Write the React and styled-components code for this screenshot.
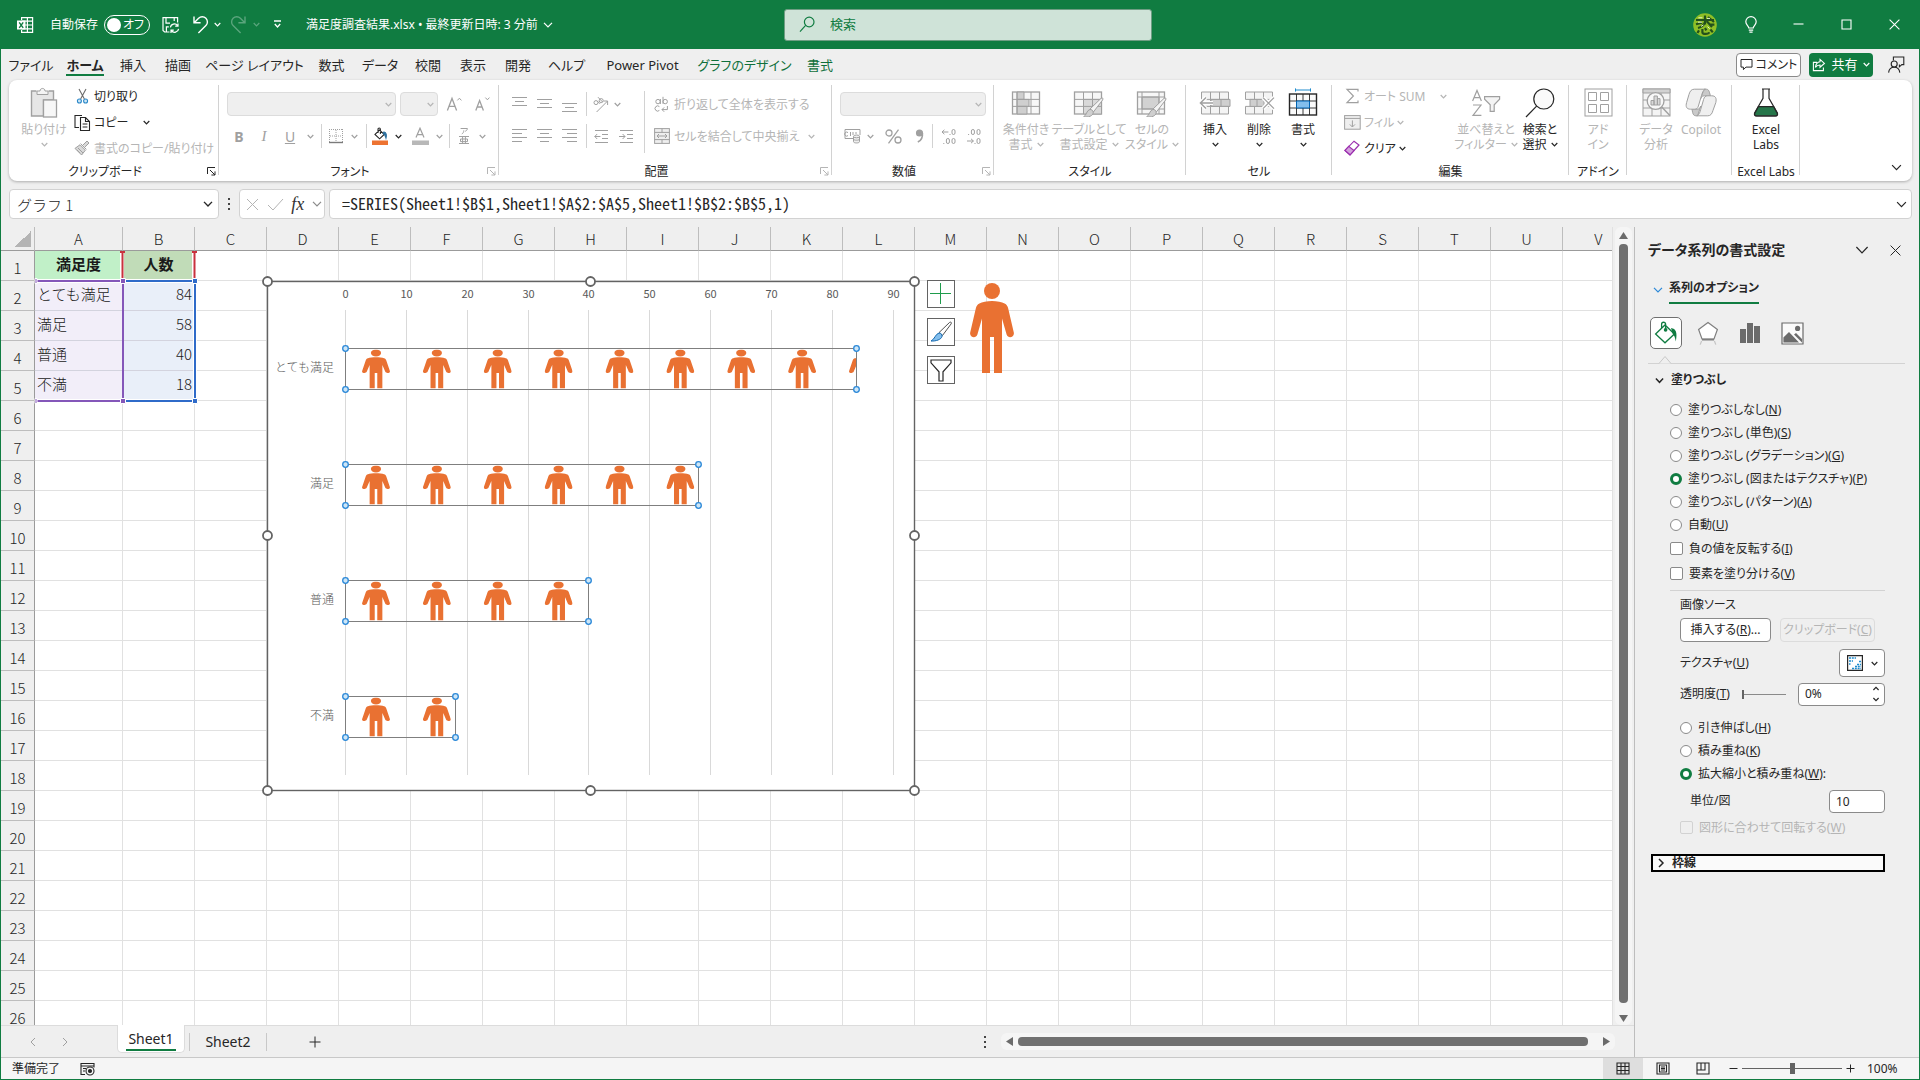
import React, { useState } from 'react';
import styled, { createGlobalStyle, css } from 'styled-components';

const GREEN = '#107c41';
const DARK = '#262626';
const GREY = '#a0a0a0';
const DISABLED = '#b5b5b5';

const TABS = [
  { name: 'ファイル', width: 56 },
  { name: 'ホーム', width: 52, active: true },
  { name: '挿入', width: 44 },
  { name: '描画', width: 46 },
  { name: 'ページ レイアウト', width: 107 },
  { name: '数式', width: 47 },
  { name: 'データ', width: 50 },
  { name: '校閲', width: 46 },
  { name: '表示', width: 44 },
  { name: '開発', width: 46 },
  { name: 'ヘルプ', width: 51 },
  { name: 'Power Pivot', width: 101 },
  { name: 'グラフのデザイン', width: 103, green: true },
  { name: '書式', width: 48, green: true },
];

const COLUMNS = 'ABCDEFGHIJKLMNOPQRSTUV'.split('');
const ROWS = Array.from({ length: 26 }, (_, i) => i + 1);
const DATA = [
  { label: 'とても満足', value: 84 },
  { label: '満足', value: 58 },
  { label: '普通', value: 40 },
  { label: '不満', value: 18 },
];

const FILLS = [
  { text: '塗りつぶしなし', accel: 'N' },
  { text: '塗りつぶし (単色)', accel: 'S' },
  { text: '塗りつぶし (グラデーション)', accel: 'G' },
  { text: '塗りつぶし (図またはテクスチャ)', accel: 'P' },
  { text: '塗りつぶし (パターン)', accel: 'A' },
  { text: '自動', accel: 'U' },
];

const STACKS = [
  { text: '引き伸ばし', accel: 'H' },
  { text: '積み重ね', accel: 'K' },
  { text: '拡大縮小と積み重ね', accel: 'W', after: ':' },
];

/* ---------- icons ---------- */

const Icon = ({ w = 16, h, box, color = GREY, children, ...rest }) => (
  <Svg
    width={w}
    height={h || w}
    viewBox={box || `0 0 ${w} ${h || w}`}
    stroke={color}
    aria-hidden="true"
    {...rest}
  >
    {children}
  </Svg>
);

const Chevron = ({ size = 7, color = DARK, width = 1.2 }) => (
  <Icon w={size} box="0 0 8 8" color={color} strokeWidth={width * (8 / size)}>
    <path d="M.8 2.3 4 5.6l3.2-3.3" />
  </Icon>
);

const ExcelIcon = () => (
  <Icon w={18} color="#fff" strokeWidth="1.2">
    <path d="M5.6 4V1.6h11v14.8h-11V14M5.6 5.2h11M8 9h8.6M5.6 12.8h11M11.4 1.6v14.8" />
    <rect x="1" y="4.5" width="8.5" height="9" fill="#fff" stroke="none" />
    <path d="m3.2 6.4 4 5.4M7.2 6.4l-4 5.4" stroke={GREEN} strokeWidth="1.4" />
  </Icon>
);

const SaveIcon = () => (
  <Icon w={18} color="#fff" strokeWidth="1.2">
    <path d="M7.5 16H2.6L1 14.4V1.6h14.6v5M4 1.6v5.6h4M4.4 16v-5.2h2.4M12.2 1.6V5" />
    <path d="M8.4 11.4a4 4 0 0 1 7.2-1.8M16 7.4v2.8h-2.8M16.6 12.8a4 4 0 0 1-7.2 1.8M9 17v-2.8h2.8" />
  </Icon>
);

const UndoIcon = ({ flip, color }) => (
  <Icon w={17} h={19} color={color} strokeWidth="1.4">
    <path
      transform={flip ? 'translate(17 0) scale(-1 1)' : undefined}
      d="M2 1.4v6.4h6.6M2.4 7.4 6.6 3.3a5.1 5.1 0 0 1 7.3 7.3L6.4 18"
    />
  </Icon>
);

const CustomizeIcon = () => (
  <Icon w={9} color="#fff" strokeWidth="1.3">
    <path d="M1 1h7M1.8 4l2.7 3 2.7-3" />
  </Icon>
);

const SearchIcon = () => (
  <Icon w={17} color={GREEN} strokeWidth="1.2">
    <circle cx="10.2" cy="6" r="4.8" />
    <path d="M6.6 9.4 1 15.6" />
  </Icon>
);

const AvatarIcon = () => (
  <Icon w={24} color="#22501c" strokeWidth="2.2">
    <circle cx="12" cy="12" r="11.8" fill="#8fbf26" stroke="none" />
    <path d="M3 7h18M12 2.4v9M3 11.2l6-1.6M15 4l6 5M5 15c4-1 6-3 7-6M13.6 8l5.4 6M17.4 11.6h4" />
    <path d="M6 17.4 4.4 20M9.4 16v3.6c0 1.8 6.2 1.8 6.8-.4M12 15l1.4 2.4M17.4 16.6l2.4 2.6" />
    <path d="M5 9.200h4M14 5.400h3M8 13.400l2.400-1.400M14.600 13.600l2 2M5.400 4.800h4" stroke="#e8f5c8" strokeWidth="1" />
  </Icon>
);

const BulbIcon = () => (
  <Icon w={12} h={17} color="#fff" strokeWidth="1.2">
    <path d="M3.8 12c0-2-3-3.2-3-6.2a5.2 5.2 0 0 1 10.4 0c0 3-3 4.2-3 6.2zM3.8 14.2h4.4M4.4 16.2h3.2" />
  </Icon>
);

const WindowIcon = ({ d }) => (
  <Icon w={11} color="#fff" strokeWidth="1.1"><path d={d} /></Icon>
);

const CommentIcon = () => (
  <Icon w={13} color={DARK}><path d="M1 1.5h11v7.6H6L3.4 11.6V9.1H1z" /></Icon>
);

const ShareIcon = () => (
  <Icon w={14} color="#fff" strokeWidth="1.1">
    <path d="M5 4.4H1.4v8.2h10V9.4M8 1.4l4.4 4L8 9.2V7C5.6 7 4.4 7.8 3.4 9.4 3.8 6 5.4 4 8 3.8z" />
  </Icon>
);

const PersonChatIcon = () => (
  <Icon w={18} color={DARK} strokeWidth="1.1">
    <path d="M6.4 4.4V1h10.4v7.6h-2l-2.4 2.2V8.6" />
    <circle cx="7.2" cy="8" r="3" />
    <path d="M1.6 16.6c.4-3.6 2.6-5.4 5.6-5.4s5.2 1.8 5.6 5.4" />
  </Icon>
);

const PasteIcon = () => (
  <Icon w={28} h={31}>
    <path d="M6.5 4H1.5v25h12V13h10V4h-5" fill="#e6e6e6" strokeWidth="1.4" />
    <path d="M7 7.5V4h3c0-3.4 5-3.4 5 0h3v3.5z" fill="#f4f4f4" />
    <rect x="13.5" y="13" width="13" height="17" fill="#f7f7f7" strokeWidth="1.3" />
  </Icon>
);

const CutIcon = () => (
  <Icon w={13} h={16} color="#6b6b6b" strokeWidth="1.1">
    <path d="m3 1 5.4 10M10 1 4.6 11" />
    <circle cx="3.4" cy="13" r="2" stroke="#2b88c8" fill="#cde6f7" />
    <circle cx="9.6" cy="13" r="2" stroke="#2b88c8" fill="#cde6f7" />
  </Icon>
);

const CopyIcon = () => (
  <Icon w={17} color={DARK} strokeWidth="1.1">
    <path d="M5 13.5H1V1.5h7" />
    <path d="M6.5 3.5h5l4 4v9h-9zM11.5 3.5v4h4M8.6 10h4.8M8.6 13h4.8" />
  </Icon>
);

const PainterIcon = () => (
  <Icon w={16}>
    <path d="m9 5 4-4 2 2-4 4M6.6 3.6l5.8 5.8M1 8.4l5-3.6 5.4 5.4L7.6 15z" fill="#d9d9d9" />
    <path d="m4 8 5 5M3 10l3 3" />
  </Icon>
);

const LaunchIcon = ({ color }) => (
  <Icon w={10} color={color}>
    <path d="M1.5 8V1.5H9M4 4l5 5M9 5.4V9H5.4" />
  </Icon>
);

const BorderIcon = () => (
  <Icon w={16}>
    <path d="M1 1.5h14M1.5 1v13M14.5 1v13M8 2v12M2 8h12" strokeDasharray="1 1" />
    <path d="M1 14.5h14" stroke="#7a7a7a" strokeWidth="1.4" />
  </Icon>
);

const FillIcon = () => (
  <Icon w={17} h={18} color={DARK} strokeWidth="1.1">
    <path d="M3 7.4 7.6 3l4.6 4.4-4.6 4.4zM6 6V2.4c0-1.8 2.4-1.8 2.4 0V7" />
    <path d="M12 5c2.4.6 2.8 3 2 6-.6-2.4-1-3.6-2.8-4.6z" fill="#2b6f9e" stroke="#2b6f9e" />
    <rect x="0" y="13.5" width="16" height="4.5" fill="#ed7331" stroke="none" />
  </Icon>
);

const FontColorIcon = () => (
  <Icon w={17} h={18}>
    <path d="m4 10.6 4-9.4 4 9.4M5.4 7.6h5.2" strokeWidth="1.2" />
    <rect x="0" y="13.5" width="17" height="4.5" fill="#b8b8b8" stroke="none" />
  </Icon>
);

const SizeIcon = ({ grow }) => (
  <Icon w={17} h={16}>
    <path d={grow ? 'M1.4 14.4 6 2.4l4.6 12M3 10.4h6' : 'M1.8 14.4 5.6 4.6l3.8 9.8M3.2 11h4.8'} strokeWidth="1.3" />
    <path d={grow ? 'm11.4 4.4 2-2.2 2 2.2' : 'm11.4 1.6 2 2.2 2-2.2'} />
  </Icon>
);

const RubyIcon = () => (
  <Icon w={12} h={18}>
    <path d="M2.6 1.5h6.8c0 1.4-1 2.2-2.2 2.8M5.8 3.4C5.8 5 5.2 6.2 3.8 7" />
    <path d="M1 9.5h10M2.5 12h7v2.6h-7zM4.6 9.5v7M7.4 9.5v7M1 16.5h10" />
  </Icon>
);

const LinesIcon = ({ lines }) => (
  <Icon w={15} h={16} strokeWidth="1">
    {lines.map(([x1, x2, y]) => (
      <path key={y} d={`M${x1} ${y}.5H${x2}`} />
    ))}
  </Icon>
);

const AngleIcon = () => (
  <Icon w={17} h={17}>
    <path d="M3.6 16 14.6 5M10.6 5h4v4" />
    <circle cx="3" cy="6.6" r="2" />
    <path d="M4.4 5.2 7 7.8" />
    <circle cx="8.2" cy="4.6" r="2" />
    <path d="M5 1.2 9.6 6" />
  </Icon>
);

const IndentIcon = ({ right }) => (
  <Icon w={15} h={15}>
    <path d="M1 1.5h13M8 5.5h6M8 9.5h6M1 13.5h13" />
    <path d={right ? 'M0 7.5h6M3.6 5 6 7.5 3.6 10' : 'M6.4 7.5H.8M3.2 5 .8 7.5 3.2 10'} />
  </Icon>
);

const WrapIcon = () => (
  <Icon w={16} h={17}>
    <circle cx="4" cy="5.6" r="2.2" />
    <path d="M6.4 3v5M9 .8v7" />
    <circle cx="11.2" cy="5.6" r="2.2" />
    <path d="M5.4 10.6a2.6 2.6 0 1 0 0 3.8M13.4 10v3.6H8M10.2 11.4 8 13.6l2.2 2.2" />
  </Icon>
);

const MergeIcon = () => (
  <Icon w={16}>
    <rect x=".6" y=".6" width="14.8" height="14.8" fill="#efefef" />
    <path d="M.6 4.4h14.8M.6 11.6h14.8M8 .6v3.8M8 11.6v3.8M3 8h10M5 6 3 8l2 2M11 6l2 2-2 2" />
  </Icon>
);

const CurrencyIcon = () => (
  <Icon w={17} h={16}>
    <path d="M9 10.5H1v-9h15V7M4 4.6a2 2 0 1 0 0 3M6.5 4v4M9 4v3M12 4v2" />
    <path d="M9.5 8.6v5c0 1.8 6 1.8 6 0v-5M9.5 11c0 1.6 6 1.6 6 0" fill="#efefef" />
    <ellipse cx="12.5" cy="8.4" rx="3" ry="1.4" fill="#efefef" />
  </Icon>
);

const DecimalIcon = ({ less }) => (
  <Icon w={17} h={17}>
    {less ? (
      <>
        <rect x="5.4" y="1.5" width="3" height="5" rx="1.5" />
        <rect x="11" y="1.5" width="3" height="5" rx="1.5" />
        <rect x="11" y="10.5" width="3" height="5" rx="1.5" />
        <path d="M2.6 6v1M1 13h6.4M5 10.8 7.4 13 5 15.2M9 15v1" />
      </>
    ) : (
      <>
        <rect x="11" y="1.5" width="3" height="5" rx="1.5" />
        <rect x="5.4" y="10.5" width="3" height="5" rx="1.5" />
        <rect x="11" y="10.5" width="3" height="5" rx="1.5" />
        <path d="M7.4 4H1M3.4 1.8 1 4l2.4 2.2M9 6v1M2.8 15v1" />
      </>
    )}
  </Icon>
);

const Brush = () => (
  <>
    <path d="M15 18 26 7.4c1.6-1 2.6 0 1.6 1.6L18.4 21z" fill="#f4f4f4" />
    <path d="M15 18.4c1.8 0 3.4 1.4 3.2 3.4-.2 3-5 5-9.6 4 3-1.2 2.8-6.6 6.4-7.4z" fill="#cfcfcf" />
  </>
);

const CondIcon = () => (
  <Icon w={30} h={28}>
    <rect x="1.5" y="3" width="27" height="22" fill="#f7f7f7" strokeWidth="1.3" />
    <path d="M6 3h7v7.4H6zM6 10.4h12v7H6zM6 17.4h10V25H6z" fill="#cfcfcf" />
    <path d="M1.5 10.4h27M1.5 17.4h27M6 3v22M20 3v22" />
  </Icon>
);

const TableFormatIcon = () => (
  <Icon w={32} h={28}>
    <rect x="1.5" y="3" width="27" height="22" fill="#f7f7f7" strokeWidth="1.3" />
    <path d="M10.5 10.4h18V25h-18z" fill="#d9d9d9" />
    <path d="M1.5 10.4h27M1.5 17.4h27M10.5 3v22M19.5 3v22" />
    <g transform="translate(2 2)"><Brush /></g>
  </Icon>
);

const CellStyleIcon = () => (
  <Icon w={32} h={28}>
    <rect x="1.5" y="3" width="27" height="22" fill="#f7f7f7" strokeWidth="1.3" />
    <path d="M6 8h17v12H6z" fill="#d2d2d2" />
    <path d="M1.5 8h27M1.5 20h27M6 3v22M23 3v22" />
    <g transform="translate(2 2)"><Brush /></g>
  </Icon>
);

const InsertCellIcon = () => (
  <Icon w={32} h={28}>
    <path d="M2.5 3h27v22h-27zM11.5 3v22M20.5 3v22" fill="#f4f4f4" />
    <path d="M12 10.4h19v7H12z" fill="#cfcfcf" />
    <path d="M22 10.4v7M2.5 10.4h27M2.5 17.4h27" />
    <path d="M14 14H1.6M7 8.4 1.4 14 7 19.6" stroke="#fff" strokeWidth="4" />
    <path d="M14 14H1.6M7 8.4 1.4 14 7 19.6" strokeWidth="1.4" />
  </Icon>
);

const DeleteCellIcon = () => (
  <Icon w={32} h={28}>
    <path d="M2.5 3h27v7.4h-27zM2.5 17.4h27V25h-27zM11.5 3v7.4M20.5 3v7.4M11.5 17.4V25M20.5 17.4V25" fill="#f4f4f4" />
    <path d="M7 10.4h14v7H7zM14 10.4v7" fill="#cfcfcf" />
    <path d="m20 8.6 11 11M31 8.6l-11 11" stroke="#fff" strokeWidth="4" />
    <path d="m20 8.6 11 11M31 8.6l-11 11" strokeWidth="1.2" />
  </Icon>
);

const FormatCellIcon = () => (
  <Icon w={30} h={30} color={DARK}>
    <rect x="1.5" y="6" width="27" height="21" fill="#fafafa" strokeWidth="1.4" />
    <path d="M1.5 13h27M1.5 20h27M8.5 6v21M21.5 6v21M15 6v7M15 20v7" strokeWidth=".9" />
    <path d="M8.5 13h13v7h-13z" fill="#83beec" stroke="#0063b1" />
    <path d="M7.5 2h15M7.5 .4v3.2M22.5.4v3.2" stroke="#1e8bcd" />
  </Icon>
);

const SumIcon = () => (
  <Icon w={15} h={16} strokeWidth="1.2">
    <path d="M13 3.6V1.4H2L8.4 8 2 14.6h11v-2.2" />
  </Icon>
);

const FillDownIcon = () => (
  <Icon w={17} h={15}>
    <rect x=".6" y=".6" width="15.6" height="13.6" fill="#efefef" />
    <path d="M.6 3.4h15.6M8.4 5.4v6.4M5.8 9.4l2.6 2.6L11 9.4" />
  </Icon>
);

const EraserIcon = () => (
  <Icon w={16} color="#9b2fae" strokeWidth="1.2">
    <path d="M10 1.2 15 5 6 14.8 1 10.4z" fill="#fff" />
    <path d="M4.8 6.4 10 10.6 6 14.8 1 10.4z" fill="#d3a0dc" />
  </Icon>
);

const SortIcon = () => (
  <Icon w={30} h={28} strokeWidth="1.2">
    <path d="M1.6 12 6 1.4 10.4 12M3.2 8.6h5.6M2 16h8L2 26.4h8.4" />
    <path d="M13.6 7.6h15v2.6l-5.4 5.6v6.6h-4v-6.6l-5.6-5.6z" fill="#f4f4f4" />
  </Icon>
);

const FindIcon = () => (
  <Icon w={30} h={30} color={DARK} strokeWidth="1.2">
    <circle cx="18.8" cy="11" r="10" fill="#fafafa" />
    <path d="M11.6 18.2 1 29" />
  </Icon>
);

const AddinIcon = () => (
  <Icon w={29} h={29}>
    <rect x="1" y="1" width="27" height="27" />
    <path d="M4.5 4.5h8v8h-8zM16.5 4.5h8v8h-8zM4.5 16.5h8v8h-8zM16.5 16.5h8v8h-8z" />
  </Icon>
);

const AnalyzeIcon = () => (
  <Icon w={29} h={29}>
    <rect x="1" y="1" width="27" height="27" fill="#f4f4f4" />
    <path d="M1 1h27v4H1z" fill="#d2d2d2" />
    <path d="M1 12h27M1 20h27M10 5v23M19 5v23" />
    <circle cx="13.6" cy="13" r="8.4" fill="#f8f8f8" strokeWidth="1.3" />
    <path d="m19.8 19 8 8.4" strokeWidth="1.4" />
    <path d="M9 12.5h3V17H9zM12 8h3.4v9H12zM15.4 10.6H18V17h-2.6z" fill="#d9d9d9" />
  </Icon>
);

const CopilotIcon = () => (
  <Icon w={32} h={29}>
    <path d="M19 1.2h2.4c1.8 0 2.6 1.4 3.2 3.6l.8 3h-6c-2.6 0-3.4 1.6-4 3.4z" fill="#c9c9c9" />
    <path d="M12.6 27.8h-1.8c-1.8 0-2.8-1.4-3.2-3.4l-.6-3.2h4.8c2.6 0 3.4-1.4 4-3.2z" fill="#c9c9c9" />
    <path d="M9.4 1.2h11c-2.4 1-3 3.4-3.8 6L13.4 18c-.6 2-1.4 3.2-4 3.2H5.6c-4 0-5.2-2.4-4-6.6L4 6.4C5 3 6.4 1.2 9.4 1.2z" fill="#efefef" />
    <path d="M22.8 27.8h-11c2.4-1 3.2-3.4 3.8-6l3-10.4c.6-2.2 1.6-3.6 4.2-3.6h4c3.8 0 5 2.6 4 6.8L28 22.4c-1 3.6-2.4 5.4-5.2 5.4z" fill="#efefef" />
  </Icon>
);

const FlaskIcon = () => (
  <Icon w={26} h={29} color={DARK} strokeWidth="1.2">
    <path d="M9 1h8M10 1v9.4L1.6 25c-.6 1.6.2 3 2 3h18.8c1.8 0 2.6-1.4 2-3L16 10.4V1" />
    <path d="M5.4 18.6h15.2l3.6 6.6c.6 1.4 0 2.6-1.8 2.6H3.6c-1.8 0-2.4-1.2-1.8-2.6z" fill="#26764a" />
  </Icon>
);

const PersonShape = () => (
  <g stroke="none" fill="#e97132">
    <circle cx="22" cy="8" r="8" />
    <path d="M22 18c5 0 10 1 12.6 2.4 2 1 3 2.6 3.6 5l5.6 24.200c1 4.600-5.600 6.600-7.200 2L32 35.600V90h-8V54h-4v36h-8V35.600L7.400 51.600c-1.600 4.600-8.200 2.600-7.200-2L5.800 25.400c.6-2.400 1.600-4 3.600-5C12 19 17 18 22 18z" />
  </g>
);

/* ---------- title bar ---------- */

const TitleBar = () => {
  const [autoSave, setAutoSave] = useState(false);
  return (
    <TitleWrap>
      <QuickAccess>
        <TitleButton $w={34} aria-label="Excel"><ExcelIcon /></TitleButton>
        <AutoSave>
          自動保存
          <input
            type="checkbox"
            checked={autoSave}
            onChange={e => setAutoSave(e.target.checked)}
          />
          <Pill>オフ</Pill>
        </AutoSave>
        <TitleButton $w={42} aria-label="上書き保存"><SaveIcon /></TitleButton>
        <TitleButton $w={16} aria-label="元に戻す"><UndoIcon color="#fff" /></TitleButton>
        <TitleButton $w={18} aria-label="元に戻す一覧"><Chevron color="#fff" /></TitleButton>
        <TitleButton $w={24} aria-label="やり直し"><UndoIcon flip color="#5ba57d" /></TitleButton>
        <TitleButton $w={12} aria-label="やり直し一覧"><Chevron color="#5ba57d" /></TitleButton>
        <TitleButton $w={30} aria-label="ツールバーのカスタマイズ"><CustomizeIcon /></TitleButton>
        <FileName>
          満足度調査結果.xlsx • 最終更新日時: 3 分前
          <Chevron size={10} color="#fff" />
        </FileName>
      </QuickAccess>
      <SearchBox>
        <SearchIcon />
        <input type="search" placeholder="検索" aria-label="検索" />
      </SearchBox>
      <WindowTools>
        <TitleButton $w={46} aria-label="アカウント"><AvatarIcon /></TitleButton>
        <TitleButton $w={46} aria-label="ヒント"><BulbIcon /></TitleButton>
        <TitleButton $w={48} aria-label="最小化"><WindowIcon d="M.5 5h10" /></TitleButton>
        <TitleButton $w={48} aria-label="最大化"><WindowIcon d="M1 1h9v9H1z" /></TitleButton>
        <TitleButton $w={48} aria-label="閉じる"><WindowIcon d="m.6.6 9.800 9.800M10.400.6.6 10.400" /></TitleButton>
      </WindowTools>
    </TitleWrap>
  );
};

/* ---------- ribbon ---------- */

const RibbonGroup = ({ name, width, launcher, inset, children }) => (
  <Group $w={width}>
    <GroupBody $inset={inset}>{children}</GroupBody>
    <GroupFooter>
      <span>{name}</span>
      {launcher && (
        <Launcher aria-label={`${name}の設定`}><LaunchIcon color={launcher} /></Launcher>
      )}
    </GroupFooter>
  </Group>
);

const Big = ({ icon, lines, width, off, arrow }) => (
  <BigButton $w={width} $off={off}>
    <IconSlot>{icon}</IconSlot>
    {lines.map((line, i) => (
      <BigLine key={line}>
        {line}
        {arrow === 'inline' && i === lines.length - 1 && (
          <Chevron color={off ? DISABLED : DARK} />
        )}
      </BigLine>
    ))}
    {arrow === 'below' && (
      <BigLine><Chevron color={off ? DISABLED : DARK} /></BigLine>
    )}
  </BigButton>
);

const Small = ({ icon, text, off, arrow, space }) => (
  <SmallButton $off={off} $space={space}>
    <SmallIcon>{icon}</SmallIcon>
    {text}
    {arrow && <Chevron color={off ? DISABLED : DARK} />}
  </SmallButton>
);

const Tool = ({ w, label, children }) => (
  <ToolButton $w={w} aria-label={label}>{children}</ToolButton>
);

const Combo = ({ w, label }) => (
  <ComboWrap $w={w}>
    <select aria-label={label} disabled><option> </option></select>
    <Chevron color={DISABLED} />
  </ComboWrap>
);

const Ribbon = () => (
  <RibbonWrap>
    <RibbonGroup name="クリップボード" width={210} launcher={DARK} inset={6}>
      <Big icon={<PasteIcon />} lines={['貼り付け']} width={58} off arrow="below" />
      <SmallStack>
        <Small icon={<CutIcon />} text="切り取り" />
        <Small icon={<CopyIcon />} text="コピー" arrow space={12} />
        <Small icon={<PainterIcon />} text="書式のコピー/貼り付け" off />
      </SmallStack>
    </RibbonGroup>
    <RibbonGroup name="フォント" width={280} launcher={DISABLED}>
      <ToolRows>
        <ToolRow>
          <Combo w={169} label="フォント" />
          <Combo w={38} label="フォント サイズ" />
          <Tool w={24} label="拡大"><SizeIcon grow /></Tool>
          <Tool w={24} label="縮小"><SizeIcon /></Tool>
        </ToolRow>
        <ToolRow $tight>
          <Tool w={24} label="太字"><b>B</b></Tool>
          <Tool w={26} label="斜体"><i>I</i></Tool>
          <Tool w={26} label="下線"><u>U</u></Tool>
          <Tool w={14} label="下線の種類"><Chevron color={GREY} /></Tool>
          <Sep />
          <Tool w={20} label="罫線"><BorderIcon /></Tool>
          <Tool w={16} label="罫線の種類"><Chevron color={GREY} /></Tool>
          <Sep />
          <Tool w={18} label="塗りつぶしの色"><FillIcon /></Tool>
          <Tool w={18} label="色の一覧"><Chevron /></Tool>
          <Tool w={26} label="フォントの色"><FontColorIcon /></Tool>
          <Tool w={12} label="文字色の一覧"><Chevron color={GREY} /></Tool>
          <Sep />
          <Tool w={20} label="ふりがな"><RubyIcon /></Tool>
          <Tool w={16} label="ふりがなの設定"><Chevron color={GREY} /></Tool>
        </ToolRow>
      </ToolRows>
    </RibbonGroup>
    <RibbonGroup name="配置" width={333} launcher={DISABLED}>
      <ToolRows $divider>
        <ToolRow $tight>
          <Tool w={25} label="上揃え"><LinesIcon lines={[[0, 15, 1], [3, 12, 5], [0, 15, 9]]} /></Tool>
          <Tool w={25} label="上下中央"><LinesIcon lines={[[0, 15, 3], [3, 12, 7], [0, 15, 11]]} /></Tool>
          <Tool w={25} label="下揃え"><LinesIcon lines={[[0, 15, 7], [3, 12, 11], [0, 15, 15]]} /></Tool>
          <Sep />
          <Tool w={20} label="方向"><AngleIcon /></Tool>
          <Tool w={12} label="方向の一覧"><Chevron color={GREY} /></Tool>
        </ToolRow>
        <ToolRow $tight>
          <Tool w={25} label="左揃え"><LinesIcon lines={[[0, 15, 1], [0, 10, 5], [0, 15, 9], [0, 10, 13]]} /></Tool>
          <Tool w={25} label="中央揃え"><LinesIcon lines={[[0, 15, 1], [3, 12, 5], [0, 15, 9], [3, 12, 13]]} /></Tool>
          <Tool w={25} label="右揃え"><LinesIcon lines={[[0, 15, 1], [5, 15, 5], [0, 15, 9], [5, 15, 13]]} /></Tool>
          <Sep />
          <Tool w={20} label="インデントを減らす"><IndentIcon /></Tool>
          <Tool w={30} label="インデントを増やす"><IndentIcon right /></Tool>
        </ToolRow>
      </ToolRows>
      <ToolRows>
        <SmallButton $off>
          <SmallIcon><WrapIcon /></SmallIcon>折り返して全体を表示する
        </SmallButton>
        <SmallButton $off $space={6}>
          <SmallIcon><MergeIcon /></SmallIcon>セルを結合して中央揃え
          <Chevron color={DISABLED} />
        </SmallButton>
      </ToolRows>
    </RibbonGroup>
    <RibbonGroup name="数値" width={162} launcher={DISABLED}>
      <ToolRows>
        <ToolRow><Combo w={146} label="表示形式" /></ToolRow>
        <ToolRow $tight>
          <Tool w={24} label="通貨"><CurrencyIcon /></Tool>
          <Tool w={12} label="通貨の一覧"><Chevron color={GREY} /></Tool>
          <Tool w={34} label="パーセント">
            <Icon w={17} h={15} strokeWidth="1.3">
              <circle cx="4" cy="4" r="3" /><circle cx="13" cy="11" r="3" /><path d="M13.500.6 3.500 14.400" />
            </Icon>
          </Tool>
          <Tool w={18} label="桁区切り">
            <Icon w={9} h={14} strokeWidth="1.6">
              <circle cx="4.500" cy="4" r="2.800" fill={GREY} /><path d="M7.400 4c.4 4-1.400 7.600-4.600 9" />
            </Icon>
          </Tool>
          <Sep />
          <Tool w={24} label="小数点以下を増やす"><DecimalIcon /></Tool>
          <Tool w={26} label="小数点以下を減らす"><DecimalIcon less /></Tool>
        </ToolRow>
      </ToolRows>
    </RibbonGroup>
    <RibbonGroup name="スタイル" width={192} inset={1}>
      <Big icon={<CondIcon />} lines={['条件付き', '書式']} width={62} off arrow="inline" />
      <Big icon={<TableFormatIcon />} lines={['テーブルとして', '書式設定']} width={64} off arrow="inline" />
      <Big icon={<CellStyleIcon />} lines={['セルの', 'スタイル']} width={62} off arrow="inline" />
    </RibbonGroup>
    <RibbonGroup name="セル" width={146}>
      <Big icon={<InsertCellIcon />} lines={['挿入']} width={58} arrow="below" />
      <Big icon={<DeleteCellIcon />} lines={['削除']} width={30} arrow="below" />
      <Big icon={<FormatCellIcon />} lines={['書式']} width={58} arrow="below" />
    </RibbonGroup>
    <RibbonGroup name="編集" width={237}>
      <SmallStack $grow>
        <Small icon={<SumIcon />} text="オート SUM" off arrow space={12} />
        <Small icon={<FillDownIcon />} text="フィル" off arrow />
        <Small icon={<EraserIcon />} text="クリア" arrow />
      </SmallStack>
      <Big icon={<SortIcon />} lines={['並べ替えと', 'フィルター']} width={50} off arrow="inline" />
      <Big icon={<FindIcon />} lines={['検索と', '選択']} width={58} arrow="inline" />
    </RibbonGroup>
    <RibbonGroup name="アドイン" width={58}>
      <Big icon={<AddinIcon />} lines={['アド', 'イン']} width={58} off />
    </RibbonGroup>
    <RibbonGroup name="" width={105}>
      <Big icon={<AnalyzeIcon />} lines={['データ', '分析']} width={58} off />
      <Big icon={<CopilotIcon />} lines={['Copilot']} width={32} off />
    </RibbonGroup>
    <RibbonGroup name="Excel Labs" width={68}>
      <Big icon={<FlaskIcon />} lines={['Excel', 'Labs']} width={68} />
    </RibbonGroup>
    <CollapseButton aria-label="リボンを折りたたむ"><Chevron size={11} /></CollapseButton>
  </RibbonWrap>
);

/* ---------- worksheet ---------- */

const X0 = 78;
const unit = 6.087;

const Chart = () => (
  <ChartSvg width="648" height="510" role="img" aria-label="満足度 人数">
    <rect x=".5" y=".5" width="647" height="509" fill="#fff" stroke="#636363" strokeWidth="1.4" />
    {Array.from({ length: 10 }, (_, i) => {
      const x = Math.round(X0 + i * 10 * unit) + 0.5;
      return (
        <g key={i}>
          <path d={`M${x} 29v465`} stroke="#d9d9d9" />
          <text x={x} y="17" textAnchor="middle">{i * 10}</text>
        </g>
      );
    })}
    {DATA.map(({ label, value }, row) => {
      const y = 67 + row * 116;
      const width = Math.round(value * unit);
      return (
        <g key={label}>
          <text x="67" y={y + 24} textAnchor="end" fontSize="12">{label}</text>
          <svg x={X0} y={y} width={width} height="42">
            {Array.from({ length: Math.ceil(value / 10) }, (_, i) => (
              <svg
                key={i}
                x={i * 10 * unit + 17}
                y="1.500"
                width="28"
                height="39"
                viewBox="0 0 44 90"
                preserveAspectRatio="none"
              >
                <PersonShape />
              </svg>
            ))}
          </svg>
          <rect x={X0 + 0.5} y={y + 0.5} width={width} height="41" fill="none" stroke="#7f7f7f" />
          {[[0, 0], [width, 0], [0, 41], [width, 41]].map(([dx, dy]) => (
            <circle
              key={`${dx}-${dy}`}
              cx={X0 + 0.5 + dx}
              cy={y + 0.5 + dy}
              r="2.800"
              fill="#cde6f7"
              stroke="#2b88d8"
              strokeWidth="1.3"
            />
          ))}
        </g>
      );
    })}
    {[0.5, 323.5, 647.5].map(x =>
      [0.5, 254.5, 509.5].map(y =>
        x === 323.5 && y === 254.5 ? null : (
          <circle key={`${x}-${y}`} cx={x} cy={y} r="4.500" fill="#fff" stroke="#636363" strokeWidth="1.800" />
        )
      )
    )}
  </ChartSvg>
);

const Ranges = () => (
  <RangeSvg width="200" height="180" fill="none" aria-hidden="true">
    <path d="M121 24v30M193 24v30" stroke="#fff" strokeWidth="4" />
    <path d="M121.500 24v28M193.500 24v28" stroke="#c9323e" strokeWidth="2" />
    <path d="M119 25h5M191 25h5" stroke="#c9323e" strokeWidth="2" />
    <path d="M34 54h160v120H34" stroke="#fff" strokeWidth="4" />
    <path d="M34 54h88v120H34" stroke="#8457b9" strokeWidth="2" />
    <path d="M123 54h71v120h-71" stroke="#2f6bc9" strokeWidth="2" />
    {[54, 174].map(y => (
      <g key={y} stroke="#fff">
        <path d={`M34 ${y - 2.5}h2v5h-2z`} fill="#8457b9" />
        <path d={`M119.500 ${y - 2.5}h5v5h-5z`} fill="#8457b9" />
        <path d={`M191.500 ${y - 2.5}h5v5h-5z`} fill="#2f6bc9" />
      </g>
    ))}
  </RangeSvg>
);

const cellText = (row, col) => {
  if (row === 1) return { A: '満足度', B: '人数' }[col];
  const item = DATA[row - 2];
  if (!item) return null;
  return { A: item.label, B: item.value }[col];
};

const Sheet = () => (
  <SheetArea>
    <SheetTable>
      <colgroup>
        <col style={{ width: 34 }} />
        {COLUMNS.map(col => (
          <col key={col} style={{ width: col === 'A' ? 88 : 72 }} />
        ))}
      </colgroup>
      <thead>
        <tr>
          <ColHead aria-label="すべて選択"><SelectAll /></ColHead>
          {COLUMNS.map(col => <ColHead key={col} scope="col">{col}</ColHead>)}
        </tr>
      </thead>
      <tbody>
        {ROWS.map(row => (
          <tr key={row}>
            <RowHead scope="row">{row}</RowHead>
            {COLUMNS.map(col => (
              <Cell key={col} $col={col} $row={row}>{cellText(row, col)}</Cell>
            ))}
          </tr>
        ))}
      </tbody>
    </SheetTable>
    <Ranges />
    <Chart />
    <ChartTools>
      <button aria-label="グラフ要素">
        <Icon w={22} color="#1f9c4c"><path d="M10.500 0v21M0 10.500h21" /></Icon>
      </button>
      <button aria-label="グラフ スタイル">
        <Icon w={22} color="#505050">
          <path d="M9 11.600 19.600 1.400c1.400-.8 2.200.2 1.600 1.400L12.400 14.600z" fill="#fff" />
          <path d="M9 12c2 0 3.400 1.400 3 3.400-.6 3-6 5-11 4.600C4.600 18.600 5.400 12.800 9 12z" fill="#83beec" stroke="#1469b0" />
        </Icon>
      </button>
      <button aria-label="グラフ フィルター">
        <Icon w={22} h={23} color={DARK} strokeWidth="1.2"><path d="M1 1h20v2.800l-8 9V22H9v-9.200l-8-9z" /></Icon>
      </button>
    </ChartTools>
    <Figure width="44" height="90" viewBox="0 0 44 90" aria-label="人のアイコン" role="img">
      <PersonShape />
    </Figure>
  </SheetArea>
);

/* ---------- format pane ---------- */

const Accel = ({ text, accel, after }) => (
  <span>{text}(<u>{accel}</u>){after}</span>
);

const FormatPane = () => {
  const [fill, setFill] = useState('P');
  const [stack, setStack] = useState('W');
  return (
    <Pane>
      <PaneTitle>
        <h2>データ系列の書式設定</h2>
        <PlainButton aria-label="作業ウィンドウのオプション"><Chevron size={14} /></PlainButton>
        <PlainButton aria-label="閉じる">
          <Icon w={11} color={DARK}><path d="m.6.6 9.800 9.800M10.400.6.6 10.400" /></Icon>
        </PlainButton>
      </PaneTitle>
      <SeriesOption>
        <Chevron size={10} color="#2b88d8" />
        <span>系列のオプション</span>
      </SeriesOption>
      <PaneTabs>
        <PaneTab $active aria-label="塗りつぶしと線">
          <Icon w={24} color={GREEN} strokeWidth="1.3">
            <path d="m1.600 13 9.400-9 9.400 9-9.400 8.800zM7.600 7.400V3.200c0-2.600 4-2.600 4 0v5" />
            <circle cx="11.600" cy="8.800" r="1.200" fill={GREEN} />
            <path d="M17 7c5 .6 6.600 4.600 4.800 13.400-.8-4-1.400-6-3-7.400z" fill={GREEN} stroke="none" />
          </Icon>
        </PaneTab>
        <PaneTab aria-label="効果">
          <Icon w={22} h={24} color="#7f7f7f" strokeWidth="1.2">
            <path d="m11 1.400 9.400 7L17 18H5L1.600 8.400z" fill="#fff" />
            <path d="M5 18.600h12" strokeWidth="1.800" />
            <path d="m4.600 20-1.400 3.600M17.400 20l1.400 3.600" stroke="#c4c4c4" />
          </Icon>
        </PaneTab>
        <PaneTab aria-label="系列のオプション">
          <Icon w={22} h={22} stroke="none">
            <path d="M1 7h6v14H1zM8 1h6v20H8zM15 4h6v17h-6z" fill="#6b6b6b" />
          </Icon>
        </PaneTab>
        <PaneTab aria-label="図">
          <Icon w={23} h={23} color="#6b6b6b" strokeWidth="1.2">
            <path d="M1 1h21v21H1z" fill="#fafafa" />
            <path d="M2.400 20.400v-5L8 10l10 10.400zM13 12.600l2-1.600 6 6v3.400z" fill="#6b6b6b" stroke="none" />
            <circle cx="16.600" cy="6.400" r="2.600" fill="#6b6b6b" stroke="none" />
          </Icon>
        </PaneTab>
      </PaneTabs>
      <Notch>
        <Icon w={14} h={9} color="#c8c8c8"><path d="m1 8.500 6-7 6 7" fill="#efefef" /></Icon>
      </Notch>
      <Section>
        <Chevron size={9} width={1.5} />
        塗りつぶし
      </Section>
      <Options>
        {FILLS.map(item => (
          <Option key={item.accel}>
            <Radio name="fill" checked={fill === item.accel} onChange={() => setFill(item.accel)} />
            <Accel {...item} />
          </Option>
        ))}
        <Option $tall><Check /><Accel text="負の値を反転する" accel="I" /></Option>
        <Option $tall><Check /><Accel text="要素を塗り分ける" accel="V" /></Option>
      </Options>
      <Picture>
        <span>画像ソース</span>
        <Buttons>
          <FormButton $w={91}><Accel text="挿入する" accel="R" after="..." /></FormButton>
          <FormButton $w={95} disabled><Accel text="クリップボード" accel="C" /></FormButton>
        </Buttons>
        <Line $h={32}>
          <Accel text="テクスチャ" accel="U" />
          <TextureButton aria-label="テクスチャ">
            <Icon w={16} color={DARK} strokeWidth="1.2">
              <path d="M.6.6h14.800v14.800H.6z" fill="#fff" />
              <path d="M2 3h7M2 6h4M2 9h1.500M12 6.500h2M10 9.500h4M8 11.500h6M5 13.500h9" stroke="#1e8bcd" strokeWidth="1.600" strokeDasharray="2 .8" />
            </Icon>
            <Chevron />
          </TextureButton>
        </Line>
        <Line $h={30}>
          <label htmlFor="alpha"><Accel text="透明度" accel="T" /></label>
          <AlphaRange id="alpha" type="range" min="0" max="100" defaultValue="0" />
          <Spin>
            <input type="text" defaultValue="0%" aria-label="透明度の値" />
            <Icon w={8} h={16} color={DARK} strokeWidth="1.2"><path d="m1.400 4 2.600-2.600L6.600 4M1.400 12 4 14.600 6.600 12" /></Icon>
          </Spin>
        </Line>
        <StackList>
          {STACKS.map(item => (
            <Option key={item.accel}>
              <Radio name="stack" checked={stack === item.accel} onChange={() => setStack(item.accel)} />
              <Accel {...item} />
            </Option>
          ))}
        </StackList>
        <Line $h={28} $indent>
          <label htmlFor="units">単位/図</label>
          <UnitInput id="units" type="text" defaultValue="10" />
        </Line>
        <Option $tall $off><Check disabled /><Accel text="図形に合わせて回転する" accel="W" /></Option>
      </Picture>
      <BorderSection>
        <Icon w={8} h={10} color={DARK} strokeWidth="1.5"><path d="m2 1 4 4-4 4" /></Icon>
        枠線
      </BorderSection>
    </Pane>
  );
};

/* ---------- page ---------- */

const App = () => (
  <Window>
    <GlobalStyle />
    <TitleBar />
    <TabRow>
      {TABS.map(tab => (
        <Tab key={tab.name} $w={tab.width} $active={tab.active} $green={tab.green}>
          <span>{tab.name}</span>
        </Tab>
      ))}
      <TabActions>
        <CommentButton><CommentIcon />コメント</CommentButton>
        <ShareButton><ShareIcon />共有<Chevron color="#fff" /></ShareButton>
        <PlainButton aria-label="Teams"><PersonChatIcon /></PlainButton>
      </TabActions>
    </TabRow>
    <Ribbon />
    <FormulaBar>
      <NameBox>
        <input type="text" defaultValue="グラフ 1" aria-label="名前ボックス" />
        <Chevron size={10} width={1.4} />
      </NameBox>
      <Icon w={3} h={13} stroke="none"><path d="M0 0h2v2H0zM0 5h2v2H0zM0 10h2v2H0z" fill="#444" /></Icon>
      <FxBox>
        <PlainButton aria-label="キャンセル"><Icon w={13} color="#b4b4b4"><path d="m1 1 11 11M12 1 1 12" /></Icon></PlainButton>
        <PlainButton aria-label="入力"><Icon w={17} h={13} color="#b4b4b4"><path d="m1 7 5 5L16 1" /></Icon></PlainButton>
        <FxButton aria-label="関数の挿入">fx</FxButton>
        <Chevron size={10} color="#8a8a8a" />
      </FxBox>
      <FormulaInput>
        <input
          type="text"
          aria-label="数式バー"
          defaultValue="=SERIES(Sheet1!$B$1,Sheet1!$A$2:$A$5,Sheet1!$B$2:$B$5,1)"
        />
        <Chevron size={11} />
      </FormulaInput>
    </FormulaBar>
    <Main>
      <Workbook>
        <SheetRow>
          <Sheet />
          <VScroll>
            <Icon w={9} h={7} stroke="none"><path d="M4.500 0 9 7H0z" fill="#6b6b6b" /></Icon>
            <Thumb />
            <Icon w={9} h={7} stroke="none"><path d="M0 0h9L4.500 7z" fill="#6b6b6b" /></Icon>
          </VScroll>
        </SheetRow>
        <SheetTabs>
          <NavArrows>
            <PlainButton aria-label="前のシート"><Icon w={8} h={10}><path d="M6 1 2 5l4 4" /></Icon></PlainButton>
            <PlainButton aria-label="次のシート"><Icon w={8} h={10}><path d="m2 1 4 4-4 4" /></Icon></PlainButton>
          </NavArrows>
          <ActiveSheet><span>Sheet1</span></ActiveSheet>
          <SheetTab>Sheet2</SheetTab>
          <AddSheet aria-label="新しいシート"><Icon w={12} color={DARK}><path d="M6 .5v11M.5 6h11" /></Icon></AddSheet>
          <Icon w={3} h={12} stroke="none"><path d="M0 0h2v2H0zM0 5h2v2H0zM0 10h2v2H0z" fill="#444" /></Icon>
          <HScroll>
            <Icon w={7} h={9} stroke="none"><path d="M7 0v9L0 4.500z" fill="#6b6b6b" /></Icon>
            <Thumb $row />
            <Icon w={7} h={9} stroke="none"><path d="M0 0v9l7-4.500z" fill="#6b6b6b" /></Icon>
          </HScroll>
        </SheetTabs>
      </Workbook>
      <FormatPane />
    </Main>
    <StatusBar>
      <span>準備完了</span>
      <PlainButton aria-label="マクロの記録">
        <Icon w={15} h={14} color={DARK} strokeWidth="1.1">
          <path d="M5 12.500H1v-11h13v4M1 4h13M3 6.500h3M3 9h2" />
          <circle cx="10" cy="9" r="4" /><circle cx="10" cy="9" r="1.500" fill={DARK} />
        </Icon>
      </PlainButton>
      <Views>
        <ViewButton $active aria-label="標準">
          <Icon w={14} h={13} color={DARK} strokeWidth="1.1"><path d="M1 1h12v11H1zM1 4.500h12M1 8.500h12M5 1v11M9 1v11" /></Icon>
        </ViewButton>
        <ViewButton aria-label="ページ レイアウト">
          <Icon w={14} h={13} color={DARK} strokeWidth="1.1"><path d="M1 1h12v11H1zM3.500 3h7v7h-7zM5 5h4M5 6.500h4M5 8h4" /></Icon>
        </ViewButton>
        <ViewButton aria-label="改ページ プレビュー">
          <Icon w={14} h={13} color={DARK} strokeWidth="1.1"><path d="M1 12V1h12v11zM1 8h8V1M5 1v7" /></Icon>
        </ViewButton>
      </Views>
      <ZoomControl>
        <PlainButton aria-label="縮小"><Icon w={9} color={DARK}><path d="M.5 4.500h8" /></Icon></PlainButton>
        <ZoomRange type="range" min="0" max="200" defaultValue="100" aria-label="ズーム" />
        <PlainButton aria-label="拡大"><Icon w={9} color={DARK}><path d="M.5 4.500h8M4.500.5v8" /></Icon></PlainButton>
        <ZoomValue>100%</ZoomValue>
      </ZoomControl>
    </StatusBar>
  </Window>
);

export default App;

/* ---------- styles ---------- */

const GlobalStyle = createGlobalStyle`
  * {
    box-sizing: border-box;
  }
  body {
    margin: 0;
  }
  button,
  input,
  select {
    margin: 0;
    font: inherit;
    color: inherit;
    font-feature-settings: inherit;
  }
  button {
    padding: 0;
    border: none;
    background: none;
    white-space: nowrap;
  }
`;

const Svg = styled.svg`
  display: block;
  flex: none;
  fill: none;
`;

const Window = styled.div`
  display: flex;
  flex-direction: column;
  height: 100vh;
  border: 1px solid ${GREEN};
  border-top: none;
  background: #efefef;
  color: ${DARK};
  font-family: 'Noto Sans', 'Noto Sans CJK JP', sans-serif;
  font-size: 12px;
  font-feature-settings: 'palt';
  line-height: 15px;
  overflow: hidden;
`;

const row = css`
  display: flex;
  align-items: center;
`;

const centered = css`
  ${row}
  justify-content: center;
`;

const TitleWrap = styled.header`
  display: grid;
  grid-template-columns: 1fr 368px 1fr;
  align-items: center;
  flex: none;
  height: 49px;
  padding-left: 16px;
  margin: 0 -1px;
  background: ${GREEN};
  color: #fff;
`;

const QuickAccess = styled.div`
  ${row}
`;

const TitleButton = styled.button`
  ${centered}
  flex: none;
  width: ${({ $w }) => $w}px;
  height: 32px;

  ${QuickAccess} &:first-child {
    justify-content: flex-start;
  }
`;

const AutoSave = styled.label`
  ${row}
  width: 100px;
  justify-content: space-between;
  white-space: nowrap;

  input {
    position: absolute;
    opacity: 0;
  }
`;

const Pill = styled.span`
  ${row}
  justify-content: flex-end;
  width: 46px;
  height: 20px;
  padding-right: 5px;
  border: 1px solid #fff;
  border-radius: 10px;

  &::before {
    content: '';
    width: 14px;
    height: 14px;
    margin-right: auto;
    margin-left: 2px;
    border-radius: 50%;
    background: #fff;
  }
`;

const FileName = styled.button`
  ${row}
  gap: 5px;
  margin-left: 14px;
`;

const SearchBox = styled.div`
  ${row}
  gap: 12px;
  height: 32px;
  padding: 0 14px;
  border: 1px solid #6f9d83;
  border-radius: 3px;
  background: #cfe3d8;
  color: ${GREEN};

  input {
    flex: 1;
    border: none;
    outline: none;
    background: none;
    font-size: 13px;
  }
  input::placeholder {
    color: ${GREEN};
  }
`;

const WindowTools = styled.div`
  ${row}
  justify-content: flex-end;
  padding-right: 2px;
`;

const TabRow = styled.nav`
  ${row}
  flex: none;
  height: 31px;
  padding-left: 2px;
`;

const Tab = styled.button`
  ${centered}
  flex: none;
  width: ${({ $w }) => $w}px;
  height: 31px;
  font-size: 13px;
  font-weight: ${({ $active }) => ($active ? 700 : 400)};
  color: ${({ $green }) => ($green ? '#0f703b' : DARK)};

  span {
    padding: 4px 0 1px;
    border-bottom: 2px solid ${({ $active }) => ($active ? GREEN : 'transparent')};
  }
`;

const PlainButton = styled.button`
  ${centered}
`;

const TabActions = styled.div`
  ${row}
  gap: 8px;
  margin-left: auto;
  padding-right: 14px;

  ${PlainButton} {
    margin-left: 6px;
  }
`;

const CommentButton = styled.button`
  ${centered}
  gap: 3px;
  width: 65px;
  height: 24px;
  border: 1px solid #8a8a8a;
  border-radius: 4px;
  background: #fff;
`;

const ShareButton = styled.button`
  ${centered}
  gap: 5px;
  width: 64px;
  height: 24px;
  border-radius: 4px;
  background: ${GREEN};
  color: #fff;
  font-size: 13px;
`;

const RibbonWrap = styled.section`
  display: flex;
  flex: none;
  height: 101px;
  margin: 0 7px 8px 8px;
  border-radius: 8px;
  background: #fff;
  box-shadow: 0 1px 3px rgba(0, 0, 0, 0.28);
`;

const Group = styled.div`
  display: flex;
  flex-direction: column;
  flex: none;
  width: ${({ $w }) => $w}px;
  background: linear-gradient(#d2d2d2, #d2d2d2) right 5px / 1px 90px no-repeat;
`;

const GroupBody = styled.div`
  display: flex;
  height: 81px;
  padding-left: ${({ $inset }) => $inset || 0}px;
`;

const GroupFooter = styled.div`
  ${row}
  height: 20px;

  span {
    flex: 1;
    text-align: center;
    white-space: nowrap;
  }
`;

const Launcher = styled.button`
  width: 18px;
  padding-left: 5px;
`;

const BigButton = styled.button`
  display: flex;
  flex-direction: column;
  align-items: center;
  flex: none;
  width: ${({ $w }) => $w}px;
  padding-top: 7px;
  color: ${({ $off }) => ($off ? DISABLED : DARK)};
`;

const IconSlot = styled.span`
  ${centered}
  height: 31px;
  margin-bottom: 4px;
`;

const BigLine = styled.span`
  ${centered}
  gap: 4px;
  height: 15px;
`;

const SmallStack = styled.div`
  display: flex;
  flex-direction: column;
  align-items: flex-start;
  flex: ${({ $grow }) => ($grow ? 1 : 'none')};
  gap: 2px;
  padding-top: 4px;
  padding-left: ${({ $grow }) => ($grow ? 11 : 0)}px;
`;

const SmallButton = styled.button`
  ${row}
  gap: 3px;
  height: 24px;
  color: ${({ $off }) => ($off ? DISABLED : DARK)};

  & > ${Svg} {
    margin-left: ${({ $space }) => $space || 0}px;
  }
`;

const SmallIcon = styled.span`
  ${centered}
  width: 18px;
`;

const ToolRows = styled.div`
  display: flex;
  flex-direction: column;
  gap: 8px;
  padding: 12px 0 0 8px;
  ${({ $divider }) =>
    $divider &&
    css`
      width: 146px;
      background: linear-gradient(#d2d2d2, #d2d2d2) right 11px / 1px 62px no-repeat;
    `}
`;

const ToolRow = styled.div`
  ${row}
  gap: ${({ $tight }) => ($tight ? 0 : 4)}px;
  height: 24px;
`;

const ToolButton = styled.button`
  ${centered}
  flex: none;
  width: ${({ $w }) => $w}px;
  height: 24px;
  color: ${GREY};
  font-size: 14px;

  i {
    font-family: 'Liberation Serif', serif;
    font-size: 15px;
  }
`;

const Sep = styled.span`
  width: 1px;
  height: 24px;
  margin: 0 4px;
  background: #d2d2d2;
`;

const ComboWrap = styled.div`
  ${row}
  justify-content: flex-end;
  width: ${({ $w }) => $w}px;
  height: 24px;
  padding-right: 3px;
  border: 1px solid #dcdcdc;
  border-radius: 4px;
  background: #efefef;

  select {
    flex: 1;
    min-width: 0;
    appearance: none;
    border: none;
    background: none;
  }
`;

const CollapseButton = styled.button`
  align-self: flex-end;
  margin-left: auto;
  padding: 0 10px 8px;
`;

const FormulaBar = styled.div`
  ${row}
  flex: none;
  gap: 4px;
  height: 30px;
  margin: 0 7px 8px 8px;
`;

const box = css`
  ${row}
  height: 30px;
  border: 1px solid #d2d2d2;
  border-radius: 4px;
  background: #fff;
`;

const NameBox = styled.div`
  ${box}
  width: 210px;
  margin-right: 5px;
  padding: 0 5px 0 7px;
  font-family: 'Noto Sans CJK JP', sans-serif;
  font-size: 15px;
  font-weight: 300;
  font-feature-settings: normal;

  input {
    flex: 1;
    min-width: 0;
    padding: 0;
    border: none;
    outline: none;
  }
`;

const FxBox = styled.div`
  ${box}
  justify-content: space-between;
  width: 86px;
  margin-left: 4px;
  padding: 0 2px 0 6px;
`;

const FxButton = styled.button`
  font-family: 'Liberation Serif', serif;
  font-size: 18px;
  font-style: italic;
  color: #333;
`;

const FormulaInput = styled.div`
  ${box}
  flex: 1;
  padding: 0 4px 0 12px;
  font-family: 'Noto Sans Mono CJK JP', 'Liberation Mono', monospace;
  font-size: 16px;
  font-feature-settings: normal;

  input {
    flex: 1;
    padding: 0 0 2px;
    border: none;
    outline: none;
  }
`;

const Main = styled.main`
  display: flex;
  flex: 1;
  min-height: 0;
`;

const Workbook = styled.div`
  display: flex;
  flex-direction: column;
  flex: 1;
  min-width: 0;
`;

const SheetRow = styled.div`
  display: flex;
  flex: 1;
  min-height: 0;
`;

const SheetArea = styled.div`
  position: relative;
  flex: 1;
  min-width: 0;
  overflow: hidden;
  border-right: 1px solid #e1e1e1;
  font-family: 'Noto Sans CJK JP', sans-serif;
  font-size: 15px;
  font-weight: 300;
  font-feature-settings: normal;
  line-height: 22px;
`;

const SheetTable = styled.table`
  width: 0;
  table-layout: fixed;
  border-spacing: 0;
  background: #fff;
`;

const ColHead = styled.th`
  height: 24px;
  padding: 0;
  border-right: 1px solid #bdbdbd;
  border-bottom: 1px solid #9b9b9b;
  background: #efefef;
  font-weight: inherit;
`;

const SelectAll = styled.div`
  width: 16px;
  height: 16px;
  margin-left: 14px;
  background: linear-gradient(135deg, transparent 50%, #b4b4b4 50%);
`;

const RowHead = styled.th`
  height: 30px;
  padding: 4px 0 0;
  border-right: 1px solid #9b9b9b;
  border-bottom: 1px solid #bdbdbd;
  background: #efefef;
  font-weight: inherit;
`;

const cellColor = ({ $col, $row }) => {
  if ($row > 5) return '#fff';
  if ($col === 'A') return $row === 1 ? '#c1f0c8' : '#f2eef9';
  if ($col === 'B') return $row === 1 ? '#c1dcb8' : '#e9eff9';
  return '#fff';
};

const Cell = styled.td`
  height: 30px;
  padding: 0 2px 3px;
  border-right: 1px solid #e1e1e1;
  border-bottom: 1px solid ${({ $col, $row }) => ($row < 6 && $col < 'C' ? '#d3d3de' : '#e1e1e1')};
  background: ${cellColor};
  color: #1a1a1a;
  font-weight: ${({ $row }) => ($row === 1 ? 700 : 'inherit')};
  text-align: ${({ $col, $row }) => ($row === 1 ? 'center' : $col === 'B' ? 'right' : 'left')};
  white-space: nowrap;
`;

const RangeSvg = styled.svg`
  position: absolute;
  top: 0;
  left: 0;
`;

const ChartSvg = styled.svg`
  position: absolute;
  top: 54px;
  left: 266px;
  overflow: visible;
  font-weight: 400;

  text {
    fill: #595959;
    font-size: 11px;
  }
  text[font-size='12'] {
    font-size: 12px;
    font-weight: 300;
  }
`;

const ChartTools = styled.div`
  position: absolute;
  top: 53px;
  left: 926px;
  display: flex;
  flex-direction: column;
  gap: 10px;

  button {
    ${centered}
    width: 28px;
    height: 28px;
    border: 1px solid #636363;
    background: #fff;
  }
`;

const Figure = styled.svg`
  position: absolute;
  top: 56px;
  left: 969px;
`;

const VScroll = styled.div`
  display: flex;
  flex-direction: column;
  align-items: center;
  gap: 5px;
  width: 17px;
  margin: 0 2px;
  padding: 5px 0 3px;
  border-radius: 6px;
  background: #f5f5f5;
`;

const Thumb = styled.span`
  flex: 1;
  width: 9px;
  margin-bottom: 7px;
  border-radius: 4px;
  background: #707070;
  ${({ $row }) =>
    $row &&
    css`
      width: auto;
      height: 9px;
      margin: 0 10px 0 0;
    `}
`;

const SheetTabs = styled.div`
  display: flex;
  align-items: center;
  flex: none;
  height: 32px;
  border-top: 1px solid #dcdcdc;
  font-size: 14px;
`;

const NavArrows = styled.div`
  ${row}
  gap: 24px;
  width: 116px;
  padding-left: 28px;
`;

const ActiveSheet = styled.button`
  align-self: flex-start;
  width: 68px;
  height: 28px;
  margin-top: -1px;
  border: 1px solid #dcdcdc;
  border-top: none;
  border-radius: 0 0 5px 5px;
  background: #fff;

  span {
    padding: 0 2px 1px;
    border-bottom: 2px solid ${GREEN};
  }
`;

const SheetTab = styled.button`
  width: 78px;
  height: 18px;
  margin-left: 4px;
  border: solid #c8c8c8;
  border-width: 0 1px;
`;

const AddSheet = styled.button`
  margin: 0 auto 0 42px;
`;

const HScroll = styled.div`
  ${row}
  gap: 5px;
  flex: 0 1 614px;
  height: 17px;
  margin: 0 19px 0 14px;
  padding: 0 5px;
  border-radius: 6px;
  background: #f5f5f5;
`;

const Pane = styled.aside`
  flex: none;
  width: 285px;
  padding: 11px 14px 0 13px;
  border-left: 1px solid #bdbdbd;
  line-height: 18px;
`;

const PaneTitle = styled.div`
  ${row}
  gap: 21px;
  height: 24px;
  padding-right: 4px;

  h2 {
    flex: 1;
    margin: 0;
    font-size: 14px;
    font-weight: 700;
    white-space: nowrap;
  }
`;

const SeriesOption = styled.button`
  ${row}
  gap: 6px;
  margin: 14px 0 13px 5px;
  font-weight: 700;

  span {
    padding: 3px 0 5px;
    border-bottom: 2px solid ${GREEN};
  }
`;

const PaneTabs = styled.div`
  ${row}
  gap: 10px;
  padding-left: 2px;
`;

const PaneTab = styled.button`
  ${centered}
  width: 32px;
  height: 32px;
  ${({ $active }) =>
    $active &&
    css`
      border: 1px solid #707070;
      border-radius: 5px;
      background: #fff;
    `}
`;

const Notch = styled.div`
  height: 15px;
  padding: 6px 0 0 10px;
  border-bottom: 1px solid #d2d2d2;
`;

const Section = styled.button`
  ${row}
  gap: 7px;
  margin: 7px 0 9px 7px;
  font-weight: 700;
`;

const Options = styled.div`
  margin: 0 20px 0 22px;
  padding-bottom: 4px;
  border-bottom: 1px solid #d2d2d2;
`;

const Option = styled.label`
  ${row}
  gap: 6px;
  height: ${({ $tall }) => ($tall ? 25 : 23)}px;
  color: ${({ $off }) => ($off ? DISABLED : DARK)};
  white-space: nowrap;
`;

const Radio = styled.input.attrs({ type: 'radio' })`
  flex: none;
  width: 12px;
  height: 12px;
  appearance: none;
  border: 1px solid #8a8a8a;
  border-radius: 50%;
  background: #fff;

  &:checked {
    border: 3px solid ${GREEN};
  }
`;

const Check = styled.input.attrs({ type: 'checkbox' })`
  flex: none;
  width: 13px;
  height: 13px;
  appearance: none;
  border: 1px solid #8a8a8a;
  border-radius: 2px;
  background: #fff;

  &:disabled {
    border-color: #d2d2d2;
    background: none;
  }
`;

const Picture = styled.div`
  margin: 5px 20px 0 32px;
`;

const Buttons = styled.div`
  display: flex;
  gap: 9px;
  margin: 4px 0 5px;
`;

const FormButton = styled.button`
  width: ${({ $w }) => $w}px;
  height: 24px;
  border: 1px solid #8a8a8a;
  border-radius: 4px;
  background: #fff;

  &:disabled {
    border-color: #dcdcdc;
    background: none;
    color: ${DISABLED};
  }
`;

const Line = styled.div`
  ${row}
  justify-content: space-between;
  height: ${({ $h }) => $h}px;
  padding-left: ${({ $indent }) => ($indent ? 10 : 0)}px;
`;

const TextureButton = styled.button`
  ${centered}
  gap: 8px;
  width: 46px;
  height: 28px;
  border: 1px solid #8a8a8a;
  border-radius: 4px;
  background: #fff;
`;

const AlphaRange = styled.input`
  width: 44px;
  height: 10px;
  appearance: none;
  background: linear-gradient(#8a8a8a, #8a8a8a) center / 100% 1px no-repeat;

  &::-webkit-slider-thumb {
    width: 2px;
    height: 9px;
    appearance: none;
    background: #636363;
  }
`;

const Spin = styled.span`
  ${row}
  width: 87px;
  height: 23px;
  padding: 0 4px 0 6px;
  border: 1px solid #8a8a8a;
  border-radius: 4px;
  background: #fff;

  input {
    flex: 1;
    min-width: 0;
    padding: 0;
    border: none;
    outline: none;
  }
`;

const StackList = styled.div`
  margin: 7px 0 2px;
`;

const UnitInput = styled.input`
  width: 56px;
  height: 23px;
  padding: 0 6px;
  border: 1px solid #8a8a8a;
  border-radius: 4px;
  background: #fff;
`;

const BorderSection = styled.button`
  ${row}
  gap: 7px;
  width: 234px;
  height: 18px;
  margin: 14px 0 0 3px;
  padding-left: 4px;
  border: 2px solid #000;
  background: #fafafa;
  font-weight: 700;
`;

const StatusBar = styled.footer`
  ${row}
  flex: none;
  gap: 20px;
  height: 22px;
  padding: 0 18px 0 11px;
  border-top: 1px solid #c8c8c8;
  background: #f5f5f5;
`;

const Views = styled.div`
  display: flex;
  margin: 0 -14px 0 auto;
`;

const ViewButton = styled.button`
  ${centered}
  width: 40px;
  height: 21px;
  background: ${({ $active }) => ($active ? '#dedede' : 'none')};
`;

const ZoomControl = styled.div`
  ${row}
  gap: 4px;
`;

const ZoomRange = styled.input`
  width: 100px;
  height: 12px;
  appearance: none;
  background: linear-gradient(#636363, #636363) center / 100% 1px no-repeat;

  &::-webkit-slider-thumb {
    width: 5px;
    height: 11px;
    appearance: none;
    background: #636363;
  }
`;

const ZoomValue = styled.span`
  width: 34px;
  margin-left: 8px;
`;
